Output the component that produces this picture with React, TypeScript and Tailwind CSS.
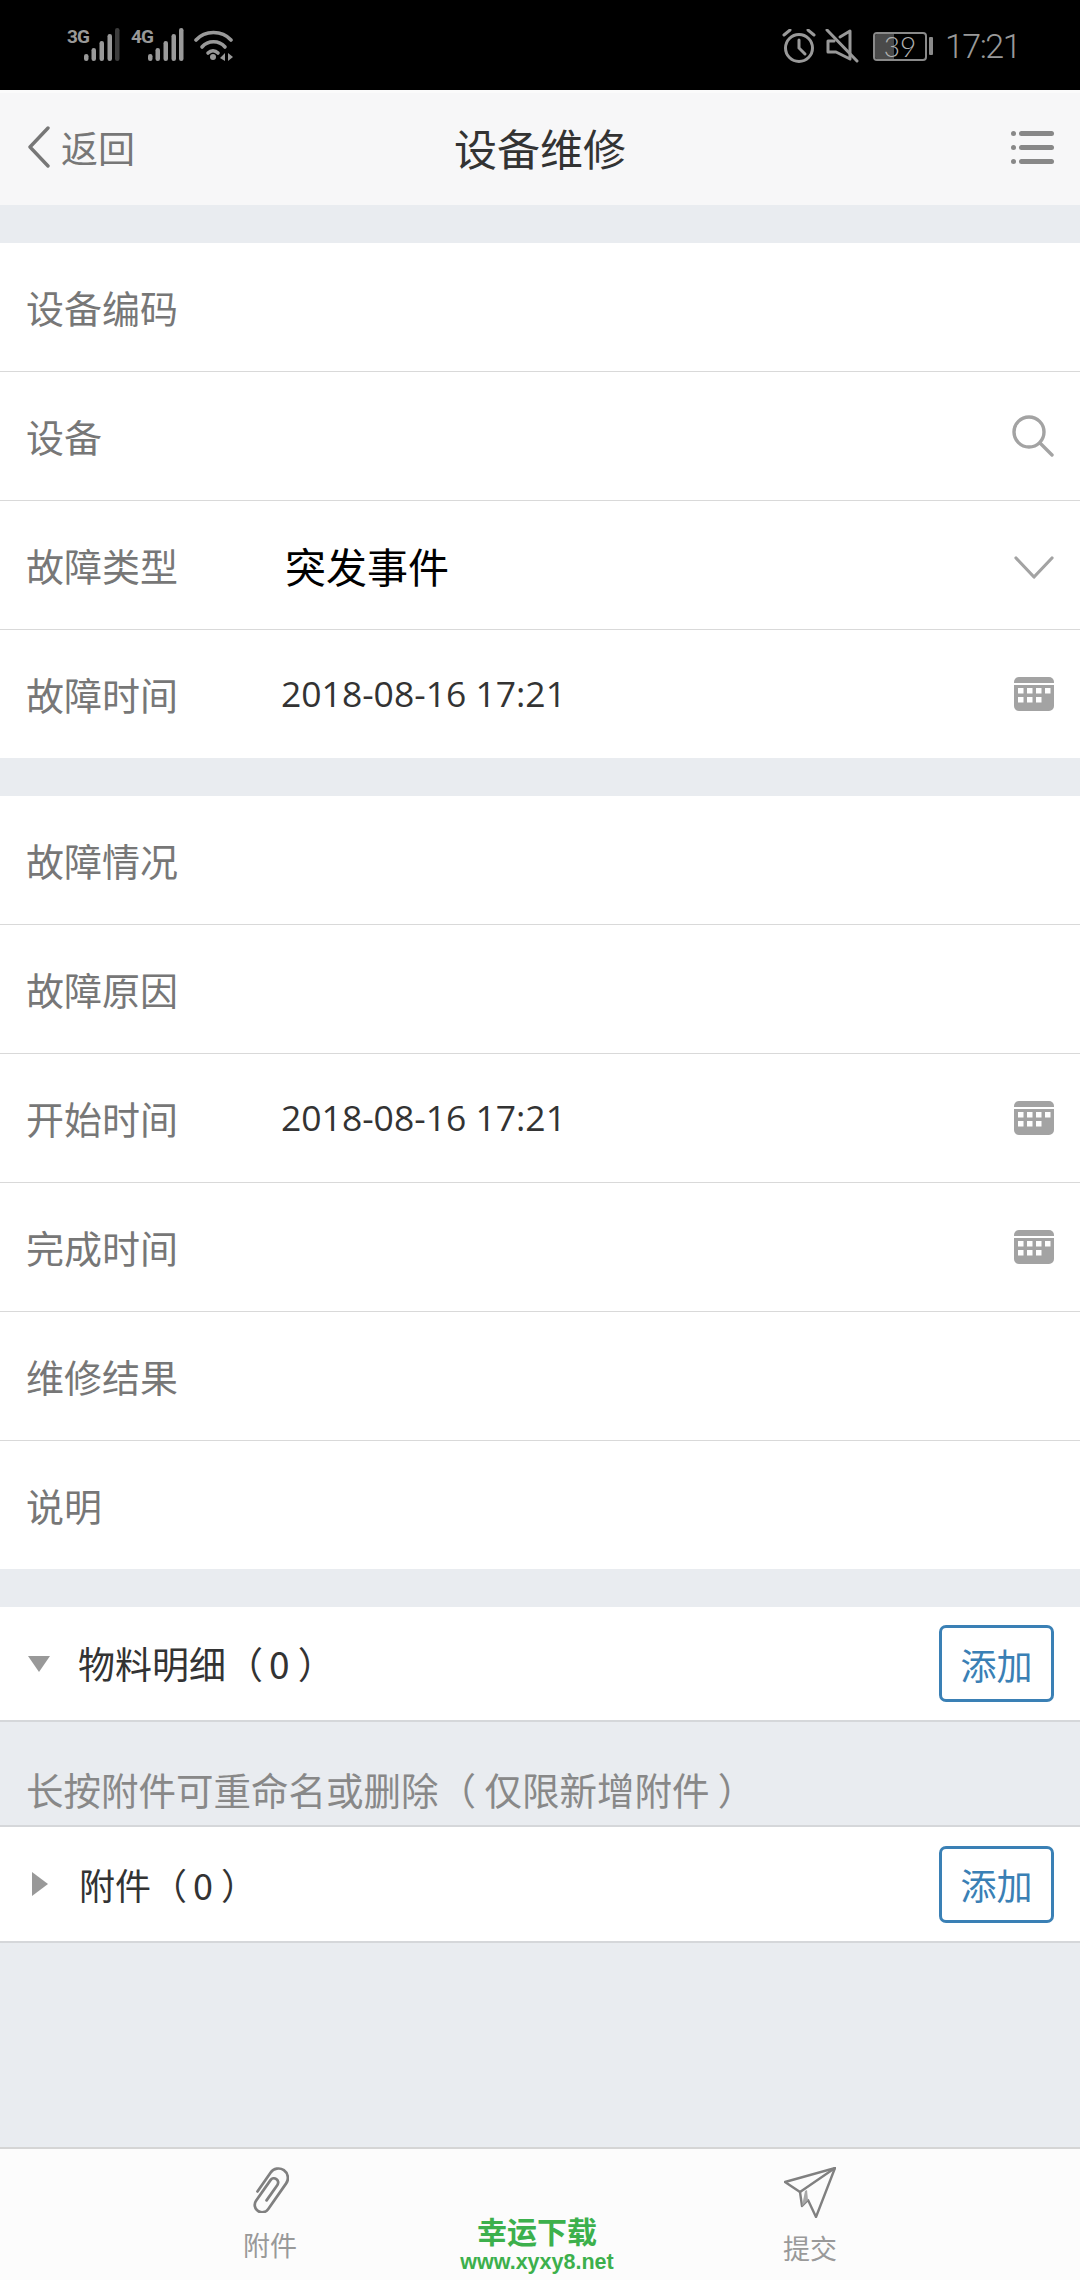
const fontCn = "font-['Noto_Sans_CJK_SC','Noto_Sans',sans-serif]";

function Signal({ label, dim }: { label: string; dim?: boolean }) {
  const bars = [
    { x: 0, top: 26 },
    { x: 7.5, top: 20 },
    { x: 15.5, top: 13 },
    { x: 23.5, top: 6 },
    { x: 31, top: 0 },
  ];
  return (
    <div className="flex items-start w-[53px]">
      <span className="w-[17px] mt-[1px] text-[19px] leading-[15px] font-bold tracking-[-1px] text-[#999] font-['Roboto',sans-serif]">{label}</span>
      <svg width="36" height="33" viewBox="0 0 36 33">
        {bars.map((b, i) => (
          <rect key={i} x={b.x} y={b.top} width="4.5" height={33 - b.top} rx="2.2" fill={dim && i === 4 ? '#3c3c3c' : '#999'} />
        ))}
      </svg>
    </div>
  );
}

function StatusBar() {
  return (
    <div className="h-[90px] bg-black flex items-start pl-[67px] pr-[60px] pt-[28px] shrink-0">
      <div className="flex items-start">
        <Signal label="3G" dim />
        <div className="ml-[11px]"><Signal label="4G" /></div>
        <svg width="40" height="33" viewBox="0 0 40 33" fill="none" stroke="#999" strokeWidth="3.6" strokeLinecap="round" className="ml-[10px] mt-[1px]">
          <path d="M2 11 C11 1 28 1 37 11" />
          <path d="M8 18 C14 11 25 11 31 18" />
          <path d="M14 24 C17 21 21 21 24 24" />
          <circle cx="19" cy="28" r="3" fill="#999" stroke="none" />
          <path d="M26 29 L31 24 V32 Z M34 24 L39 28 L34 32 Z" fill="#999" stroke="none" />
        </svg>
      </div>
      <div className="ml-auto flex items-center h-[36px]">
        <svg width="34" height="34" viewBox="0 0 34 34" fill="none" stroke="#999" strokeWidth="3" strokeLinecap="round">
          <circle cx="17" cy="19" r="13.5" />
          <path d="M17 11 V19 L23 25" />
          <path d="M2 6 L8 1 M32 6 L26 1" />
        </svg>
        <svg width="34" height="34" viewBox="0 0 34 34" fill="none" stroke="#999" strokeWidth="3" strokeLinecap="round" strokeLinejoin="round" className="ml-[9px]">
          <path d="M9 12 H3 V23 H11 L25 30 V2 L15 8" />
          <path d="M2 1 L32 32" />
        </svg>
        <div className="relative ml-[14px] w-[54px] h-[29px] border-2 border-[#8a8a8a] rounded-[4px]">
          <div className="w-[19px] h-full bg-[#4a4a4a] rounded-l-[2px]" />
          <span className="absolute inset-0 flex items-center justify-center text-[#b0b0b0] text-[28px] leading-none font-light font-['Lato',sans-serif]">39</span>
        </div>
        <div className="ml-[2px] w-[4px] h-[18px] bg-[#8a8a8a] rounded-[1px]" />
        <span className="ml-[12px] text-[34px] leading-none font-light tracking-[-1.5px] text-[#999] font-['Roboto',sans-serif]">17:21</span>
      </div>
    </div>
  );
}

function NavBar() {
  return (
    <div className="relative h-[115px] bg-[#f7f7f8] border-t-[3px] border-t-[#fbfbfb] flex items-center justify-between pl-[27px] pr-[26px] pb-[4px] shrink-0">
      <div className="flex items-center gap-[10px]">
        <svg width="24" height="42" viewBox="0 0 24 42" fill="none" stroke="#777" strokeWidth="3.4" strokeLinecap="round" strokeLinejoin="round">
          <path d="M21 2 L3 21 L21 40" />
        </svg>
        <span className="text-[37px] leading-none text-[#777]">返回</span>
      </div>
      <span className="absolute left-0 right-0 text-center text-[43px] leading-none text-[#333]">设备维修</span>
      <div className="flex flex-col gap-[9px]">
        {[0, 1, 2].map(i => (
          <div key={i} className="flex items-center gap-[3px]">
            <div className="w-[5px] h-[5px] rounded-full bg-[#888]" />
            <div className="w-[35px] h-[5px] rounded-full bg-[#888]" />
          </div>
        ))}
      </div>
    </div>
  );
}

function SearchIcon() {
  return (
    <svg width="42" height="42" viewBox="0 0 42 42" fill="none" stroke="#a3a3a3" strokeWidth="3.4" strokeLinecap="round">
      <circle cx="17" cy="17" r="15" />
      <path d="M28 28 L40 40" />
    </svg>
  );
}

function ChevronIcon() {
  return (
    <svg width="40" height="24" viewBox="0 0 40 24" fill="none" stroke="#a3a3a3" strokeWidth="3.2" strokeLinecap="round" strokeLinejoin="round" className="mt-[5px]">
      <path d="M2 2 L20 21 L38 2" />
    </svg>
  );
}

function CalendarIcon() {
  return (
    <svg width="40" height="34" viewBox="0 0 40 34">
      <path d="M5 0 H35 A5 5 0 0 1 40 5 V6 H0 V5 A5 5 0 0 1 5 0 Z" fill="#a3a3a3" />
      <path d="M0 8 H40 V29 A5 5 0 0 1 35 34 H5 A5 5 0 0 1 0 29 Z" fill="#a3a3a3" />
      {[4, 13, 22, 31].map(x => <rect key={x} x={x} y="11" width="5.5" height="5.5" fill="#fff" />)}
      {[4, 13, 22].map(x => <rect key={x} x={x} y="20" width="5.5" height="5.5" fill="#fff" />)}
    </svg>
  );
}

function Row({ label, value, strong, icon, last }: { label: string; value?: string; strong?: boolean; icon?: React.ReactNode; last?: boolean }) {
  return (
    <div className={`flex items-center pl-[26px] pr-[26px] ${last ? 'h-[128px]' : 'h-[129px] border-b border-b-[#d9d9d9]'}`}>
      <span className="w-[255px] text-[38px] leading-none text-[#777] shrink-0">{label}</span>
      {value && (strong
        ? <span className="ml-[4px] text-[41px] leading-none text-black">{value}</span>
        : <span className="text-[35.5px] leading-none text-[#333] font-['Open_Sans',sans-serif]">{value}</span>)}
      <div className="ml-auto flex items-center justify-end">{icon}</div>
    </div>
  );
}

function AddButton() {
  return (
    <button className="w-[115px] h-[77px] border-[3px] border-[#3a80b5] rounded-[7px] bg-white text-[36px] leading-none text-[#3a80b5] flex items-center justify-center">
      添加
    </button>
  );
}

function PaperClip() {
  return (
    <svg width="38" height="46" viewBox="0 0 38 46" fill="none" stroke="#808080" strokeWidth="2.6" strokeLinecap="round">
      <g transform="translate(19 23) rotate(35) scale(1.05)">
        <path d="M-9 8 V-14 A9 9 0 0 1 9 -14 V16 A7 7 0 0 1 -5 16 V-8 A4 4 0 0 1 3 -8 V10" />
      </g>
    </svg>
  );
}

function PaperPlane() {
  return (
    <svg width="52" height="51" viewBox="0 0 52 51" fill="none" stroke="#808080" strokeWidth="2.4" strokeLinejoin="round" strokeLinecap="round">
      <path d="M51 1 L1 15 L16 25 L18 39 L24 33 L32 50 Z" />
      <path d="M51 1 L16 25" />
      <path d="M21 24 L18 39 L24 33 L23 23 Z" fill="#a8a8a8" stroke="none" />
    </svg>
  );
}

export default function App() {
  return (
    <div className={`relative w-[1080px] h-[2280px] flex flex-col bg-[#e9ecf0] overflow-hidden ${fontCn}`}>
      <StatusBar />
      <NavBar />

      <div className="mt-[38px] bg-white shrink-0">
        <Row label="设备编码" />
        <Row label="设备" icon={<SearchIcon />} />
        <Row label="故障类型" value="突发事件" strong icon={<ChevronIcon />} />
        <Row label="故障时间" value="2018-08-16 17:21" icon={<CalendarIcon />} last />
      </div>

      <div className="mt-[38px] bg-white shrink-0">
        <Row label="故障情况" />
        <Row label="故障原因" />
        <Row label="开始时间" value="2018-08-16 17:21" icon={<CalendarIcon />} />
        <Row label="完成时间" icon={<CalendarIcon />} />
        <Row label="维修结果" />
        <Row label="说明" last />
      </div>

      <div className="mt-[38px] h-[115px] bg-white border-b-2 border-b-[#d5d7da] flex items-center pl-[28px] pr-[26px] shrink-0">
        <svg width="22" height="16" viewBox="0 0 22 16" className="shrink-0">
          <path d="M0 0 H22 L11 16 Z" fill="#999" />
        </svg>
        <span className="ml-[28px] text-[37px] leading-none text-[#333]">物料明细（<span className="ml-[6px]">0</span> ）</span>
        <div className="ml-auto"><AddButton /></div>
      </div>

      <div className="h-[105px] border-b-2 border-b-[#d5d7da] flex items-end pl-[26px] pb-[18px] shrink-0">
        <span className="text-[37.5px] leading-none text-[#888] whitespace-pre">长按附件可重命名或删除（ 仅限新增附件 ）</span>
      </div>

      <div className="h-[116px] bg-white border-b-2 border-b-[#d5d7da] flex items-center pl-[32px] pr-[26px] shrink-0">
        <svg width="16" height="24" viewBox="0 0 16 24" className="shrink-0">
          <path d="M0 0 L16 12 L0 24 Z" fill="#999" />
        </svg>
        <span className="ml-[31px] text-[36px] leading-none text-[#333]">附件（<span className="ml-[6px]">0</span> ）</span>
        <div className="ml-auto"><AddButton /></div>
      </div>

      <div className="flex-1" />

      <div className="relative h-[133px] bg-[#fcfcfc] border-t-2 border-t-[#d5d5d5] shrink-0 flex">
        <div className="flex-1 flex flex-col items-center pt-[18px]">
          <PaperClip />
          <span className="mt-[18px] text-[27px] leading-none text-[#999]">附件</span>
        </div>
        <div className="flex-1 flex flex-col items-center pt-[18px]">
          <PaperPlane />
          <span className="mt-[16px] text-[27px] leading-none text-[#999]">提交</span>
        </div>
        <div className="absolute left-[459px] top-[64px] w-[156px] flex flex-col items-center text-[#3cb04c] font-bold whitespace-nowrap">
          <span className="text-[30px] leading-[34px]">幸运下载</span>
          <span className="text-[21.5px] leading-[30px] font-['Liberation_Sans',sans-serif]">www.xyxy8.net</span>
        </div>
      </div>
    </div>
  );
}
